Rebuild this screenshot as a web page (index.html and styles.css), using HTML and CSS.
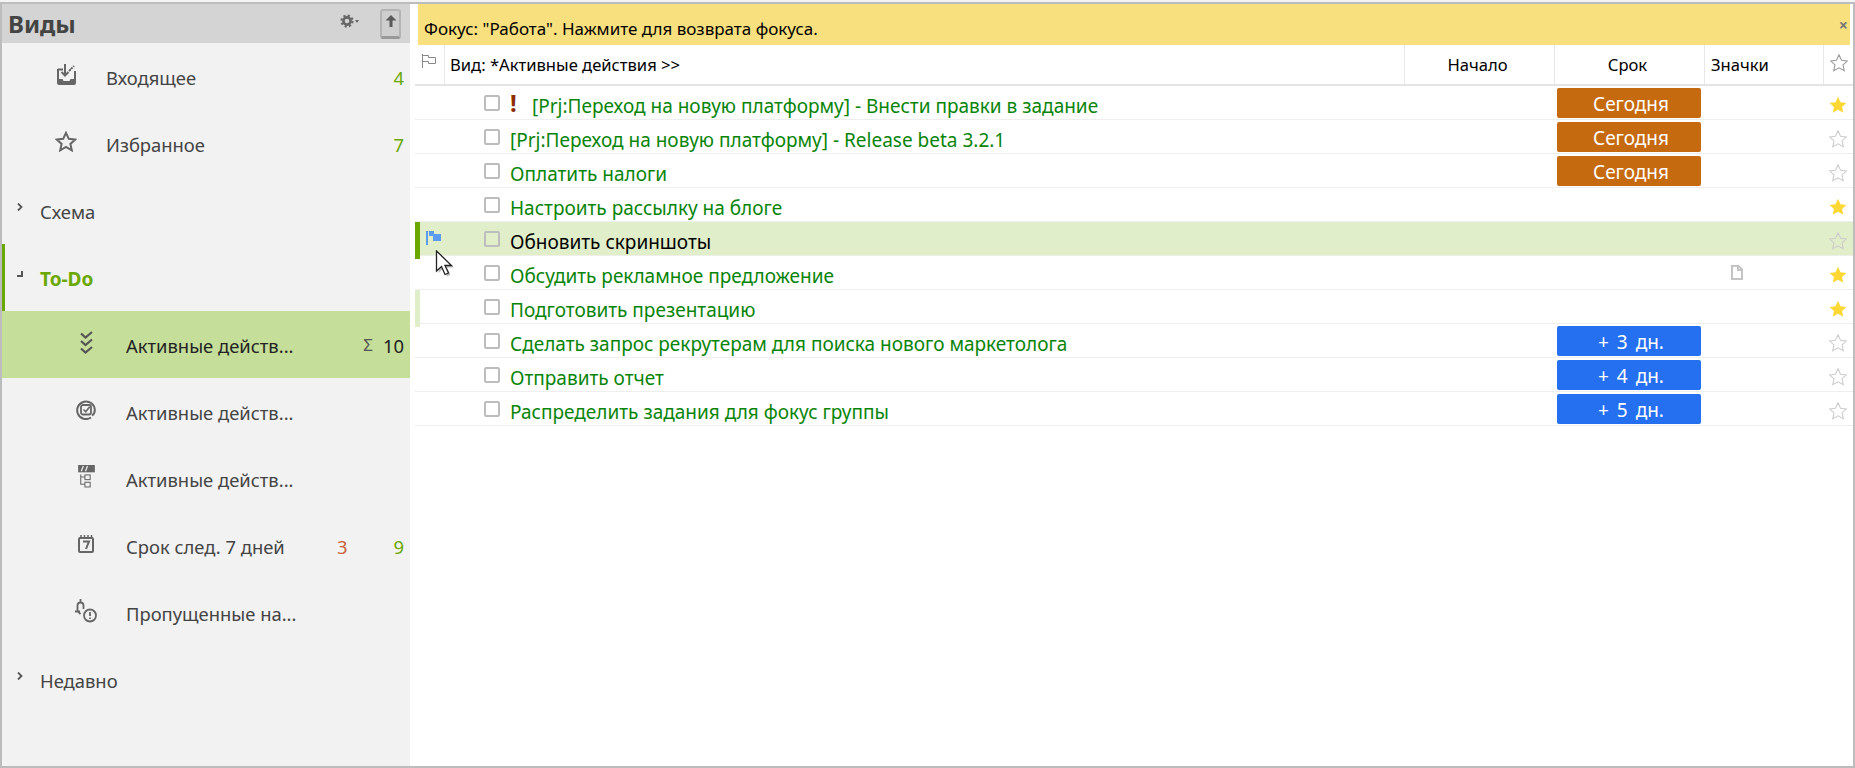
FILE: index.html
```html
<!DOCTYPE html>
<html lang="ru">
<head>
<meta charset="utf-8">
<title>Виды</title>
<link rel="stylesheet" href="styles.css">
</head>
<body>
<svg class="defs" width="0" height="0" aria-hidden="true">
  <defs>
    <path id="star" d="M8.500.8l2.400 5.100 5.600.6-4.200 3.800 1.200 5.500-5-2.800-5 2.800 1.200-5.500L.5 6.500l5.600-.6z"/>
  </defs>
</svg>
<div class="app">
  <aside class="sidebar">
    <header class="side-head">
      <h1 class="side-title">Виды</h1>
      <button class="gear-btn" aria-label="Настройки">
        <svg width="19" height="14" viewBox="0 0 19 14"><circle cx="7" cy="7" r="3.600" fill="none" stroke="#666" stroke-width="2.600"/><circle cx="7" cy="7" r="5.600" fill="none" stroke="#666" stroke-width="2" stroke-dasharray="2.200 2.200"/><path d="M15 6h4l-2 3z" fill="#666"/></svg>
      </button>
      <button class="up-btn" aria-label="Вверх">
        <svg width="12" height="12" viewBox="0 0 12 12"><path d="M6 0l5.500 5.600H7.500V12h-3V5.600H.5z" fill="#5a5a5a"/></svg>
      </button>
    </header>
    <nav class="side-list">
      <div class="side-row lvl-top">
        <span class="side-icon"><svg width="19" height="21" viewBox="0 0 19 21"><path d="M1 5.500h5M13 5.500h1M1 5v14a1 1 0 0 0 1 1h15a1 1 0 0 0 1-1V7" fill="none" stroke="#666" stroke-width="2"/><path d="M1 15h4.500l1 2h6l1-2H18v5H1z" fill="#666"/><path d="M8 0v11M4.500 8l3.500 3.500 3.500-3.500" fill="none" stroke="#666" stroke-width="2"/><path d="M12 7l5-5" stroke="#666" stroke-width="2" stroke-dasharray="2 1"/></svg></span>
        <span class="side-label">Входящее</span>
        <span class="count green">4</span>
      </div>
      <div class="side-row lvl-top">
        <span class="side-icon"><svg width="22" height="21" viewBox="0 0 22 21"><path d="M11 1.800l2.800 6 6.500.7-4.900 4.400 1.400 6.400L11 15.800l-5.800 3.500 1.400-6.400L1.700 8.500l6.500-.7z" fill="none" stroke="#666" stroke-width="2"/></svg></span>
        <span class="side-label">Избранное</span>
        <span class="count green">7</span>
      </div>
      <div class="side-row lvl-group">
        <span class="tree-toggle"><svg width="6" height="8" viewBox="0 0 6 8"><path d="M1 .5L4.500 4 1 7.500" fill="none" stroke="#555" stroke-width="1.800"/></svg></span>
        <span class="side-label">Схема</span>
      </div>
      <div class="side-row lvl-group is-open">
        <span class="tree-toggle"><svg width="6" height="6" viewBox="0 0 6 6"><path d="M6 0v6H0V4h4V0z" fill="#555"/></svg></span>
        <span class="side-label">To-Do</span>
      </div>
      <div class="side-row lvl-child is-selected">
        <span class="side-icon"><svg width="13" height="24" viewBox="0 0 13 24"><path d="M1 2.500l4.500 4L12 1M1 10l4.500 4L12 8.500M1 17.500l4.500 4L12 16" fill="none" stroke="#555" stroke-width="2.200"/></svg></span>
        <span class="side-label">Активные действ...</span>
        <span class="sum">Σ</span>
        <span class="count-total">10</span>
      </div>
      <div class="side-row lvl-child">
        <span class="side-icon"><svg width="20" height="20" viewBox="0 0 20 20"><path d="M15 17.500A8.800 8.800 0 1 1 18.800 10c0 2.600-1.200 4.500-2.800 5.500" fill="none" stroke="#666" stroke-width="2"/><rect x="5" y="5" width="10" height="9.500" rx="2" fill="none" stroke="#666" stroke-width="1.800"/><path d="M7.500 9.500l2.200 2.200 4-5" fill="none" stroke="#666" stroke-width="1.600"/></svg></span>
        <span class="side-label">Активные действ...</span>
      </div>
      <div class="side-row lvl-child">
        <span class="side-icon"><svg width="17" height="23" viewBox="0 0 16 22"><rect width="16" height="7" fill="#666"/><path d="M3 6L5 1M7 6l2-5" stroke="#eee" stroke-width="1.200"/><rect x="6.500" y="9.500" width="5" height="4.500" fill="none" stroke="#666"/><rect x="6.500" y="16.500" width="5" height="4.500" fill="none" stroke="#666"/><path d="M2.500 9v9.500h4M2.500 11.500h4" fill="none" stroke="#666"/></svg></span>
        <span class="side-label">Активные действ...</span>
      </div>
      <div class="side-row lvl-child">
        <span class="side-icon"><svg width="16" height="18" viewBox="0 0 16 18"><path d="M3 0v3M6.500 0v3M10 0v3M13.500 0v3" stroke="#666" stroke-width="1.500"/><rect x="1" y="3" width="14" height="14" rx="1" fill="none" stroke="#666" stroke-width="2"/><path d="M5 6.500h6L8 14" fill="none" stroke="#666" stroke-width="2"/></svg></span>
        <span class="side-label">Срок след. 7 дней</span>
        <span class="count-pair"><span class="count-late">3</span><span class="count green">9</span></span>
      </div>
      <div class="side-row lvl-child">
        <span class="side-icon"><svg width="24" height="24" viewBox="0 0 24 24"><path d="M6.500 0v3M3.500 12V6.500a3 3 0 0 1 6 0V10M1 12.500h5M4 12.500l2.500 2.500" fill="none" stroke="#666" stroke-width="1.800"/><circle cx="16" cy="16.500" r="6" fill="none" stroke="#666" stroke-width="1.800"/><path d="M16 13v4M16 18.500v1.500" stroke="#666" stroke-width="1.800"/></svg></span>
        <span class="side-label">Пропущенные на...</span>
      </div>
      <div class="side-row lvl-group">
        <span class="tree-toggle"><svg width="6" height="8" viewBox="0 0 6 8"><path d="M1 .5L4.500 4 1 7.500" fill="none" stroke="#555" stroke-width="1.800"/></svg></span>
        <span class="side-label">Недавно</span>
      </div>
    </nav>
  </aside>

  <main class="main">
    <div class="focus-bar">
      <span class="focus-text">Фокус: "Работа". Нажмите для возврата фокуса.</span>
      <span class="focus-close">×</span>
    </div>
    <div class="table">
      <div class="thead grid-row">
        <div class="th th-flag"><svg width="14" height="14" viewBox="0 0 14 14"><path d="M.5 0v14M.5 1.500h6v2h7v6h-7v-2h-6" fill="none" stroke="#888"/></svg></div>
        <div class="th th-title">Вид: *Активные действия &gt;&gt;</div>
        <div class="th th-center">Начало</div>
        <div class="th th-center">Срок</div>
        <div class="th th-left">Значки</div>
        <div class="th th-star"><svg class="star" width="18" height="18" viewBox="0 0 17 17"><use href="#star" fill="none" stroke="#999"/></svg></div>
      </div>

      <div class="grid-row task">
        <div class="cell"></div>
        <div class="cell title"><span class="check"></span><span class="prio">!</span><span>[Prj:Переход на новую платформу] - Внести правки в задание</span></div>
        <div class="cell"></div>
        <div class="cell due"><span class="badge today">Сегодня</span></div>
        <div class="cell"></div>
        <div class="cell star-cell"><svg class="star" width="18" height="18" viewBox="0 0 17 17"><use href="#star" fill="#fdd835"/></svg></div>
      </div>
      <div class="grid-row task">
        <div class="cell"></div>
        <div class="cell title"><span class="check"></span><span>[Prj:Переход на новую платформу] - Release beta 3.2.1</span></div>
        <div class="cell"></div>
        <div class="cell due"><span class="badge today">Сегодня</span></div>
        <div class="cell"></div>
        <div class="cell star-cell"><svg class="star" width="18" height="18" viewBox="0 0 17 17"><use href="#star" fill="none" stroke="#ccc"/></svg></div>
      </div>
      <div class="grid-row task">
        <div class="cell"></div>
        <div class="cell title"><span class="check"></span><span>Оплатить налоги</span></div>
        <div class="cell"></div>
        <div class="cell due"><span class="badge today">Сегодня</span></div>
        <div class="cell"></div>
        <div class="cell star-cell"><svg class="star" width="18" height="18" viewBox="0 0 17 17"><use href="#star" fill="none" stroke="#ccc"/></svg></div>
      </div>
      <div class="grid-row task">
        <div class="cell"></div>
        <div class="cell title"><span class="check"></span><span>Настроить рассылку на блоге</span></div>
        <div class="cell"></div>
        <div class="cell"></div>
        <div class="cell"></div>
        <div class="cell star-cell"><svg class="star" width="18" height="18" viewBox="0 0 17 17"><use href="#star" fill="#fdd835"/></svg></div>
      </div>
      <div class="grid-row task is-current">
        <div class="cell flag-cell">
          <svg width="15" height="14" viewBox="0 0 15 14"><path d="M1 0v14" stroke="#5b9bf0" stroke-width="2"/><path d="M3 0h5v3h7v7H7V5H3z" fill="#5b9bf0"/></svg>
          <svg class="cursor" width="20" height="28" viewBox="0 0 20 28"><path d="M2 1v21l5-4.500 3.500 8 3.500-1.500-3.500-7.500h7z" fill="#000" opacity=".25" transform="translate(1.500 1)"/><path d="M1.500 1v20l5-4.500 3.500 8 3.500-1.500-3.500-7.500h6.500z" fill="#fff" stroke="#222" stroke-width="1.300"/></svg>
        </div>
        <div class="cell title"><span class="check"></span><span>Обновить скриншоты</span></div>
        <div class="cell"></div>
        <div class="cell"></div>
        <div class="cell"></div>
        <div class="cell star-cell"><svg class="star" width="18" height="18" viewBox="0 0 17 17"><use href="#star" fill="none" stroke="#ccc"/></svg></div>
      </div>
      <div class="grid-row task">
        <div class="cell"></div>
        <div class="cell title"><span class="check"></span><span>Обсудить рекламное предложение</span></div>
        <div class="cell"></div>
        <div class="cell"></div>
        <div class="cell icons-cell"><svg width="12" height="15" viewBox="0 0 12 15"><path d="M1 1h6.500L11 4.500V14H1z" fill="none" stroke="#c4c4c4" stroke-width="2"/><path d="M7 1v4h4" fill="none" stroke="#c4c4c4" stroke-width="2"/></svg></div>
        <div class="cell star-cell"><svg class="star" width="18" height="18" viewBox="0 0 17 17"><use href="#star" fill="#fdd835"/></svg></div>
      </div>
      <div class="grid-row task is-marked">
        <div class="cell"></div>
        <div class="cell title"><span class="check"></span><span>Подготовить презентацию</span></div>
        <div class="cell"></div>
        <div class="cell"></div>
        <div class="cell"></div>
        <div class="cell star-cell"><svg class="star" width="18" height="18" viewBox="0 0 17 17"><use href="#star" fill="#fdd835"/></svg></div>
      </div>
      <div class="grid-row task">
        <div class="cell"></div>
        <div class="cell title"><span class="check"></span><span>Сделать запрос рекрутерам для поиска нового маркетолога</span></div>
        <div class="cell"></div>
        <div class="cell due"><span class="badge later">+ 3 дн.</span></div>
        <div class="cell"></div>
        <div class="cell star-cell"><svg class="star" width="18" height="18" viewBox="0 0 17 17"><use href="#star" fill="none" stroke="#ccc"/></svg></div>
      </div>
      <div class="grid-row task">
        <div class="cell"></div>
        <div class="cell title"><span class="check"></span><span>Отправить отчет</span></div>
        <div class="cell"></div>
        <div class="cell due"><span class="badge later">+ 4 дн.</span></div>
        <div class="cell"></div>
        <div class="cell star-cell"><svg class="star" width="18" height="18" viewBox="0 0 17 17"><use href="#star" fill="none" stroke="#ccc"/></svg></div>
      </div>
      <div class="grid-row task">
        <div class="cell"></div>
        <div class="cell title"><span class="check"></span><span>Распределить задания для фокус группы</span></div>
        <div class="cell"></div>
        <div class="cell due"><span class="badge later">+ 5 дн.</span></div>
        <div class="cell"></div>
        <div class="cell star-cell"><svg class="star" width="18" height="18" viewBox="0 0 17 17"><use href="#star" fill="none" stroke="#ccc"/></svg></div>
      </div>
    </div>
  </main>
</div>
</body>
</html>
```
FILE: styles.css
```css
* { box-sizing: border-box; }
html, body { margin: 0; height: 100%; overflow: hidden; }
body {
  background: #f4f4f4;
  padding-top: 2px;
  font-family: "Noto Sans", "Open Sans", sans-serif;
  color: #000;
}
.defs { display: block; height: 0; }
.app {
  display: flex;
  height: 766px;
  background: #fff;
  border: 2px solid #bcbcbc;
}

/* Sidebar */
.sidebar {
  width: 408px;
  flex: none;
  background: #f2f2f2;
  display: flex;
  flex-direction: column;
}
.side-head {
  height: 39px;
  flex: none;
  background: #d4d4d4;
  display: flex;
  align-items: center;
  padding-left: 6px;
}
.side-title {
  margin: 0;
  font-size: 24px;
  font-weight: 700;
  color: #444;
  line-height: 39px;
}
.gear-btn, .up-btn { border: 0; padding: 0; background: none; display: flex; }
.gear-btn { margin-left: auto; margin-right: 21px; margin-top: -6px; }
.up-btn {
  width: 21px;
  height: 30px;
  margin-right: 9px;
  background: #cecece;
  border: 2px solid #b4b4b4;
  border-bottom: 3px solid #999;
  border-radius: 3px;
  align-items: center;
  justify-content: center;
  padding-bottom: 4px;
}
.side-list { display: flex; flex-direction: column; }
.side-row {
  height: 67px;
  display: flex;
  align-items: center;
  font-size: 18.4px;
  color: #444;
  padding-right: 6px;
  flex: none;
}
.side-icon {
  width: 32px;
  margin-right: 24px;
  display: flex;
  justify-content: center;
  margin-top: -4px;
}
.lvl-top { padding-left: 48px; }
.lvl-child { padding-left: 68px; }
.lvl-group { padding-left: 14px; }
.side-label { padding-top: 2px; white-space: nowrap; }
.tree-toggle { width: 24px; display: flex; margin-top: -7px; padding-left: 1px; }
.is-open { border-left: 3px solid #6aa800; padding-left: 11px; }
.is-open .side-label { color: #6aa800; font-weight: 700; font-size: 19px; }
.is-selected { background: #c5de9a; }
.is-selected .side-label { color: #222; }
.count, .count-total { padding-top: 2px; }
.count { margin-left: auto; }
.green { color: #6aa800; }
.sum { margin-left: auto; margin-right: 10px; font-size: 17px; color: #555; }
.count-total { color: #222; }
.count-pair { margin-left: auto; display: flex; gap: 46px; padding-top: 2px; }
.count-pair .count { padding-top: 0; }
.count-late { color: #c9603a; }

/* Main */
.main { flex: 1; min-width: 0; display: flex; flex-direction: column; }
.focus-bar {
  height: 41px;
  flex: none;
  margin: 0 3px 0 8px;
  background: #f9e07f;
  display: flex;
  align-items: center;
  justify-content: space-between;
  padding: 8px 2px 0 6px;
  font-size: 17px;
}
.focus-close { font-size: 16px; font-weight: 700; color: #777; margin-top: -8px; line-height: 1; }
.table { margin-left: 5px; display: flex; flex-direction: column; }
.grid-row {
  display: grid;
  grid-template-columns: 29px 960px 150px 150px 119px 30px;
}
.thead { height: 41px; border-bottom: 2px solid #e4e4e4; font-size: 16.6px; }
.th { display: flex; align-items: center; }
.th + .th { border-left: 1px solid #e8e8e8; }
.th-flag { padding: 0 0 8px 7px; }
.th-title { padding-left: 5px; }
.th-center { justify-content: center; padding-right: 4px; }
.th-left { padding-left: 6px; }
.th-star { padding-left: 6px; padding-bottom: 4px; }

.task { height: 34px; border-bottom: 1px solid #eee; font-size: 19px; }
.cell { display: flex; align-items: center; min-width: 0; }
.title { padding-left: 40px; color: #088508; white-space: nowrap; line-height: 33px; }
.title span:last-child { padding-top: 4px; }
.check {
  width: 16px;
  height: 16px;
  flex: none;
  margin-right: 10px;
  margin-top: -3px;
  border: 2px solid #bdbdbd;
  border-radius: 2px;
  background: #fff;
}
.prio {
  width: 22px;
  flex: none;
  color: #8c2c00;
  font-weight: 700;
  font-size: 24px;
  line-height: 24px;
  margin-top: -4px;
}
.due { padding: 2px 3px 1px; align-items: stretch; }
.badge {
  flex: 1;
  height: 30px;
  border-radius: 2px;
  color: #fff;
  text-align: center;
  line-height: 33px;
  padding-left: 4px;
  word-spacing: 3px;
}
.today { background: #c66a10; }
.later { background: #2470f0; }
.star-cell { padding-left: 6px; padding-bottom: 0; }
.star { display: block; }
.icons-cell { padding-left: 27px; padding-bottom: 4px; }
.is-current { background: #e0eec9; }
.is-current .title { color: #000; }
.is-current .check { background: transparent; }
.is-current { border-bottom-color: #eef0e8; }
.flag-cell {
  position: relative;
  border-left: 5px solid #6aa800;
  padding: 0 0 6px 6px;
}
.is-marked .cell:first-child { border-left: 5px solid #e0eec9; }
.cursor { position: absolute; left: 15px; top: 28px; z-index: 2; }
```
